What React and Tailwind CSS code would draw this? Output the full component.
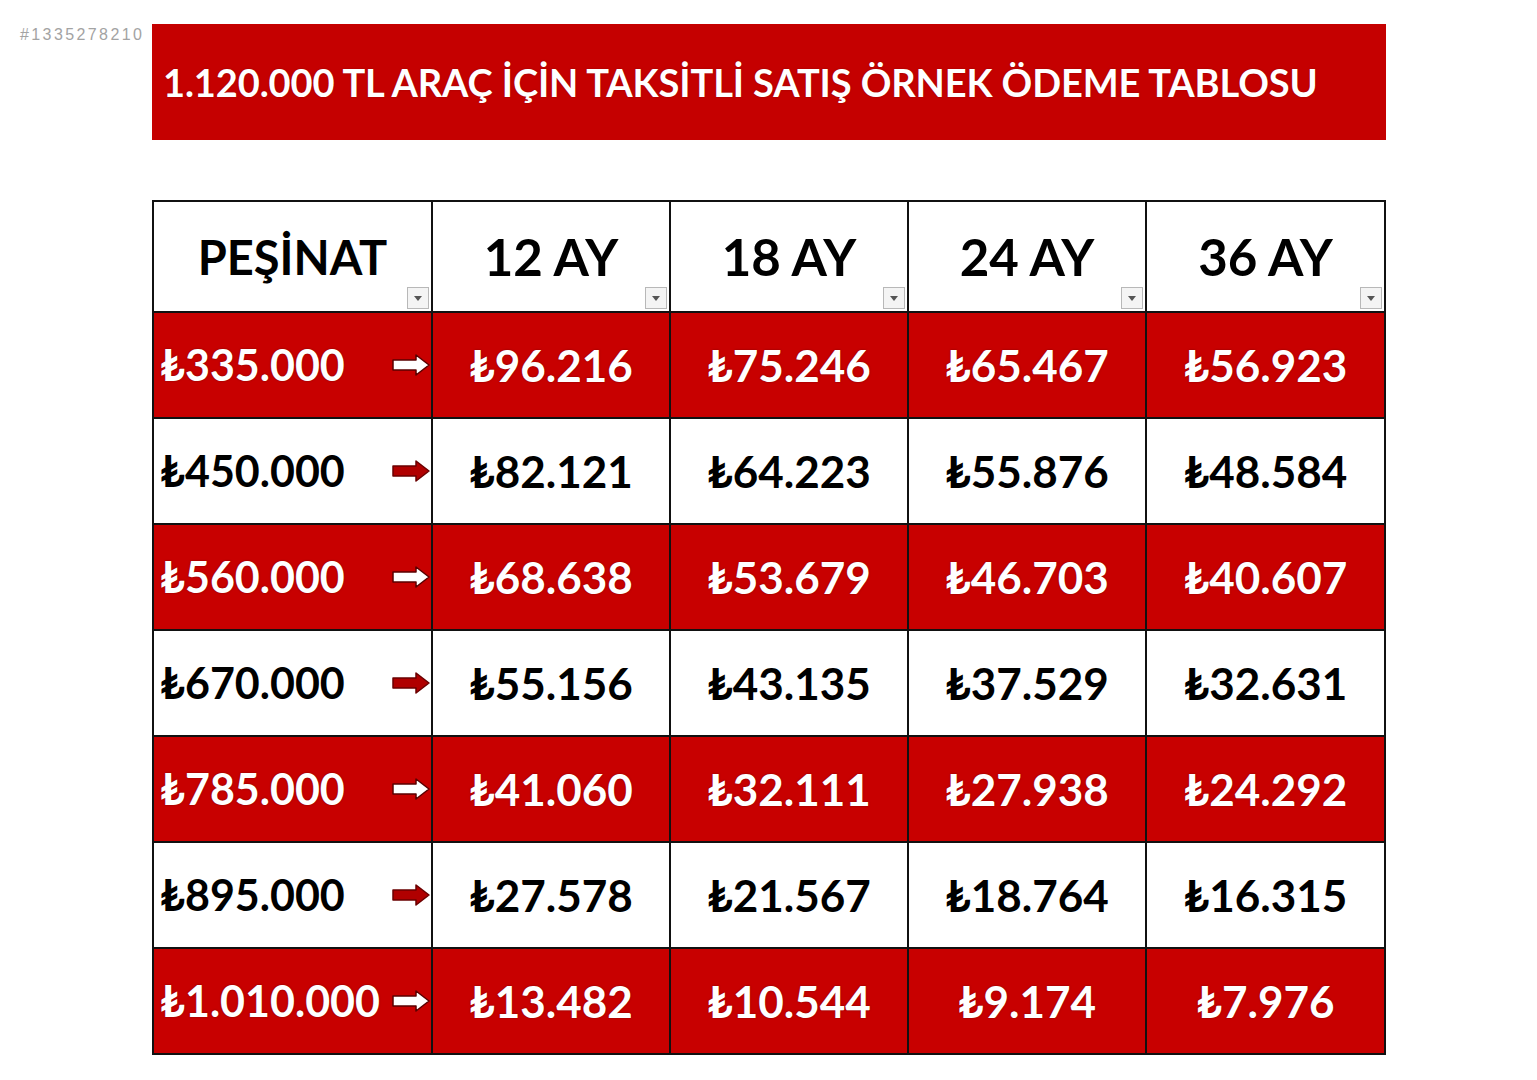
import React from 'react'

const months = ['12 AY', '18 AY', '24 AY', '36 AY']

const rows = [
  { down: '₺335.000', vals: ['₺96.216', '₺75.246', '₺65.467', '₺56.923'] },
  { down: '₺450.000', vals: ['₺82.121', '₺64.223', '₺55.876', '₺48.584'] },
  { down: '₺560.000', vals: ['₺68.638', '₺53.679', '₺46.703', '₺40.607'] },
  { down: '₺670.000', vals: ['₺55.156', '₺43.135', '₺37.529', '₺32.631'] },
  { down: '₺785.000', vals: ['₺41.060', '₺32.111', '₺27.938', '₺24.292'] },
  { down: '₺895.000', vals: ['₺27.578', '₺21.567', '₺18.764', '₺16.315'] },
  { down: '₺1.010.000', vals: ['₺13.482', '₺10.544', '₺9.174', '₺7.976'] },
]

function Arrow({ red }) {
  return (
    <svg width="40" height="24" viewBox="0 0 40 24" className="shrink-0">
      <path
        d="M2 7 H25 V2 L38 12 L25 22 V17 H2 Z"
        fill={red ? '#b00000' : '#ffffff'}
        stroke={red ? '#6a0000' : '#5a0000'}
        strokeWidth="1.5"
        strokeLinejoin="round"
      />
    </svg>
  )
}

function FilterBox() {
  return (
    <div className="absolute right-[2px] bottom-[2px] w-[22px] h-[22px] border border-[#b8b8b8] bg-[#f4f4f4] flex items-center justify-center">
      <svg width="8" height="5" viewBox="0 0 8 5">
        <path d="M0 0 H8 L4 5 Z" fill="#555" />
      </svg>
    </div>
  )
}

export default function App() {
  return (
    <div className="w-[1537px] h-[1080px] bg-white relative font-['Lato','DejaVu_Sans',sans-serif]">
      <div className="absolute left-[20px] top-[23px] text-[16px] tracking-[2.4px] text-[#a3a3a3] font-['Liberation_Sans',sans-serif]">
        #1335278210
      </div>

      <div className="pl-[152px] pt-[24px]">
        <div className="w-[1234px] h-[116px] bg-[#c50000] flex items-center pl-[11px]">
          <h1 className="text-white font-bold text-[38px] tracking-[-0.1px] [text-shadow:0_0_2px_rgba(120,0,0,0.6)]">
            1.120.000 TL ARAÇ İÇİN TAKSİTLİ SATIŞ ÖRNEK ÖDEME TABLOSU
          </h1>
        </div>

        <div className="mt-[60px] w-[1234px] grid grid-cols-[277px_236px_236px_236px_237px] grid-rows-[109px_repeat(7,104px)] gap-[2px] bg-[#111] p-[2px]">
          <div className="bg-white relative flex items-center justify-center pt-[2px]">
            <span className="text-[47px] font-bold text-black">PEŞİNAT</span>
            <FilterBox />
          </div>
          {months.map((m) => (
            <div key={m} className="bg-white relative flex items-center justify-center pt-[2px]">
              <span className="text-[51px] font-bold text-black">{m}</span>
              <FilterBox />
            </div>
          ))}

          {rows.map((r, i) => {
            const red = i % 2 === 0
            const cell = red
              ? 'bg-[#c80000] text-white [text-shadow:0_0_2px_rgba(90,0,0,0.7)]'
              : 'bg-white text-black'
            return (
              <React.Fragment key={r.down}>
                <div className={`${cell} flex items-center justify-between pl-[6px] pr-0`}>
                  <span className="text-[43px] font-bold">{r.down}</span>
                  <Arrow red={!red} />
                </div>
                {r.vals.map((v, j) => (
                  <div key={j} className={`${cell} flex items-center justify-center`}>
                    <span className="text-[44px] font-bold">{v}</span>
                  </div>
                ))}
              </React.Fragment>
            )
          })}
        </div>
      </div>
    </div>
  )
}
